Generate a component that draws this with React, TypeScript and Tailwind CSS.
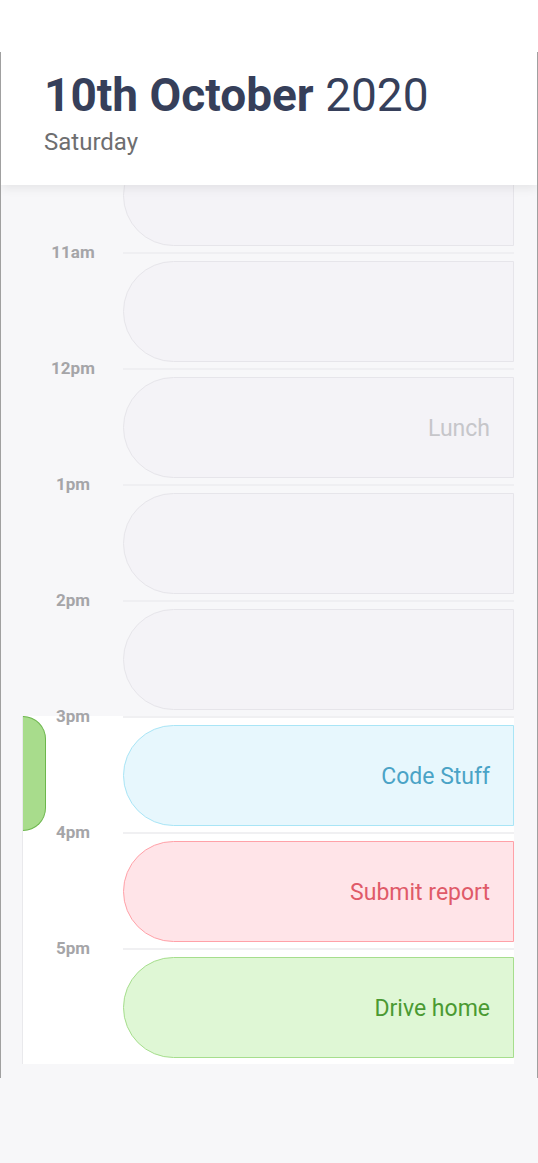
const slots = [
    { label: "", title: "", tone: "past" },
    { label: "11am", title: "", tone: "past" },
    { label: "12pm", title: "Lunch", tone: "past" },
    { label: "1pm", title: "", tone: "past" },
    { label: "2pm", title: "", tone: "past" },
    { label: "3pm", title: "Code Stuff", tone: "blue" },
    { label: "4pm", title: "Submit report", tone: "red" },
    { label: "5pm", title: "Drive home", tone: "green" },
];

const tones: Record<string, string> = {
    past: "bg-[#f4f3f7] border-[#e6e5ea] text-[#c6c6ca]",
    blue: "bg-[#e7f7fd] border-[#a9e5f6] text-[#4aa3c6]",
    red: "bg-[#ffe4e8] border-[#ffa1a8] text-[#e05a68]",
    green: "bg-[#dff7d5] border-[#a6de8d] text-[#4a9a32]",
};

function Slot({ label, title, tone }: { label: string; title: string; tone: string }) {
    return (
        <div className="flex h-[116px] w-[491px]">
            <div className="w-[100px] -mt-[10px] h-[20px] text-center text-[17px] leading-[20px] font-bold text-[#a5a5a8]">
                {label}
            </div>
            <div className="flex-1 flex flex-col">
                <div className={`h-[2px] ${tone === "past" ? "bg-[#efeff2]" : "bg-[#f0f0f2]"}`}></div>
                <div className={`mt-[7px] h-[101px] rounded-l-full border flex items-center justify-end pr-[23px] pt-[4px] text-[23px] ${tones[tone]}`}>
                    {title}
                </div>
            </div>
        </div>
    );
}

export default function App() {
    const past = slots.filter((s) => s.tone === "past");
    const upcoming = slots.filter((s) => s.tone !== "past");

    return (
        <div className="w-[538px] h-[1163px] bg-[#f7f7f9] overflow-hidden font-['Roboto',sans-serif]">
            <div className="h-[52px] bg-white"></div>

            <div className="relative h-[1026px] border-x border-[#a0a0a0] overflow-hidden">
                <div className="pt-[84px]">
                    <div className="ml-[22px]">
                        {past.map((s, i) => (
                            <Slot key={i} {...s} />
                        ))}
                    </div>
                    <div className="relative ml-[21px] w-[492px] border-l border-[#e9e9ec] bg-white">
                        <div className="absolute left-0 top-0 w-[23px] h-[115px] rounded-r-full border border-l-0 border-[#6cb64c] bg-[#a8dc8c]"></div>
                        {upcoming.map((s, i) => (
                            <Slot key={i} {...s} />
                        ))}
                    </div>
                </div>

                <div className="absolute top-0 left-0 right-0 h-[133px] bg-white pl-[43px] pt-[20px] shadow-[0_3px_10px_rgba(0,0,0,0.08)]">
                    <h1 className="text-[46px] leading-none text-[#363f5a]">
                        <span className="font-bold">10th October</span> 2020
                    </h1>
                    <p className="mt-[12px] text-[24px] leading-none text-[#6e6e70]">Saturday</p>
                </div>
            </div>
        </div>
    );
}
